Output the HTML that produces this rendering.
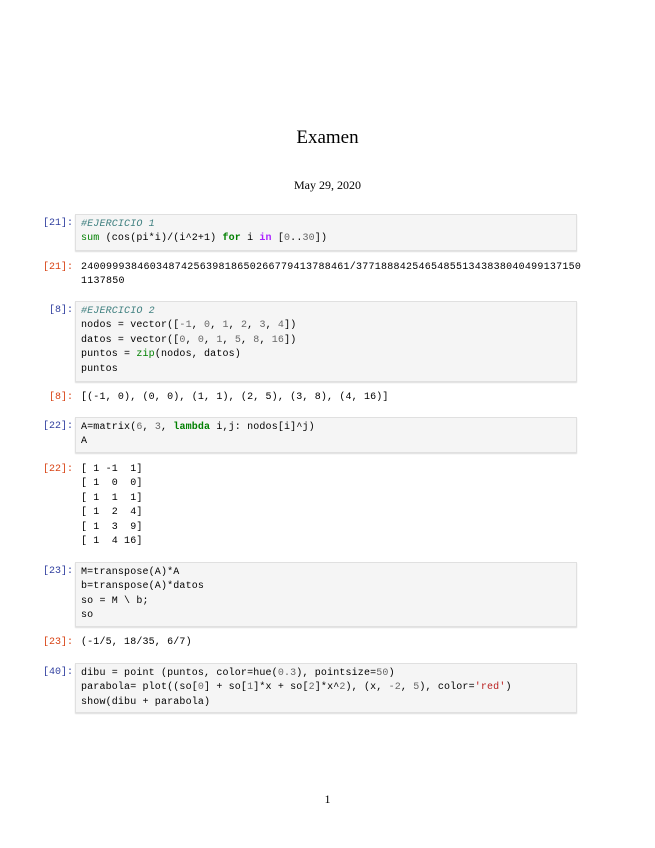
<!DOCTYPE html>
<html><head><meta charset="utf-8"><style>
body{margin:0;background:#fff;width:655px;height:848px;position:relative;font-family:"Liberation Mono",monospace;font-size:10px;color:#000}
.t{position:absolute;left:0;width:655px;text-align:center;font-family:"Liberation Serif",serif}
.p{position:absolute;left:30px;width:43px;text-align:right;line-height:14.4px}
.in{color:#303f9f}.out{color:#d84315}
.box{position:absolute;left:75px;width:502px;background:#f5f5f5;border:1px solid #e0e0e0;box-shadow:0 1px 1px #ddd;box-sizing:border-box;padding:3px 5px;line-height:14.4px;white-space:pre;letter-spacing:0.15px}
.o{position:absolute;left:81px;line-height:14.4px;white-space:pre;letter-spacing:0.15px}
.c{color:#408080;font-style:italic}.k{color:#008000;font-weight:bold}.n{color:#666}.w{color:#aa22ff;font-weight:bold}.s{color:#ba2121}.b{color:#008000}
</style></head><body>
<div class="t" style="top:127px;font-size:19px">Examen</div>
<div class="t" style="top:178px;font-size:12px">May 29, 2020</div>

<div class="p in" style="top:217px">[21]:</div>
<div class="box" style="top:214px;height:37px"><span class="c">#EJERCICIO 1</span>
<span class="b">sum</span> (cos(pi*i)/(i^2+1) <span class="k">for</span> i <span class="w">in</span> [<span class="n">0</span>..<span class="n">30</span>])</div>

<div class="p out" style="top:261px">[21]:</div>
<div class="o" style="top:261px;letter-spacing:0.25px">2400999384603487425639818650266779413788461/377188842546548551343838040499137150
1137850</div>

<div class="p in" style="top:304px">[8]:</div>
<div class="box" style="top:301px;height:81px"><span class="c">#EJERCICIO 2</span>
nodos = vector([<span class="n">-1</span>, <span class="n">0</span>, <span class="n">1</span>, <span class="n">2</span>, <span class="n">3</span>, <span class="n">4</span>])
datos = vector([<span class="n">0</span>, <span class="n">0</span>, <span class="n">1</span>, <span class="n">5</span>, <span class="n">8</span>, <span class="n">16</span>])
puntos = <span class="b">zip</span>(nodos, datos)
puntos</div>

<div class="p out" style="top:391px">[8]:</div>
<div class="o" style="top:391px">[(-1, 0), (0, 0), (1, 1), (2, 5), (3, 8), (4, 16)]</div>

<div class="p in" style="top:420px">[22]:</div>
<div class="box" style="top:417px;height:36px">A=matrix(<span class="n">6</span>, <span class="n">3</span>, <span class="k">lambda</span> i,j: nodos[i]^j)
A</div>

<div class="p out" style="top:463px">[22]:</div>
<div class="o" style="top:463px">[ 1 -1  1]
[ 1  0  0]
[ 1  1  1]
[ 1  2  4]
[ 1  3  9]
[ 1  4 16]</div>

<div class="p in" style="top:565px">[23]:</div>
<div class="box" style="top:562px;height:65px">M=transpose(A)*A
b=transpose(A)*datos
so = M \ b;
so</div>

<div class="p out" style="top:636px">[23]:</div>
<div class="o" style="top:636px">(-1/5, 18/35, 6/7)</div>

<div class="p in" style="top:666px">[40]:</div>
<div class="box" style="top:663px;height:50px">dibu = point (puntos, color=hue(<span class="n">0.3</span>), pointsize=<span class="n">50</span>)
parabola= plot((so[<span class="n">0</span>] + so[<span class="n">1</span>]*x + so[<span class="n">2</span>]*x^<span class="n">2</span>), (x, <span class="n">-2</span>, <span class="n">5</span>), color=<span class="s">'red'</span>)
show(dibu + parabola)</div>

<div class="t" style="top:792px;font-size:12px">1</div>
</body></html>
